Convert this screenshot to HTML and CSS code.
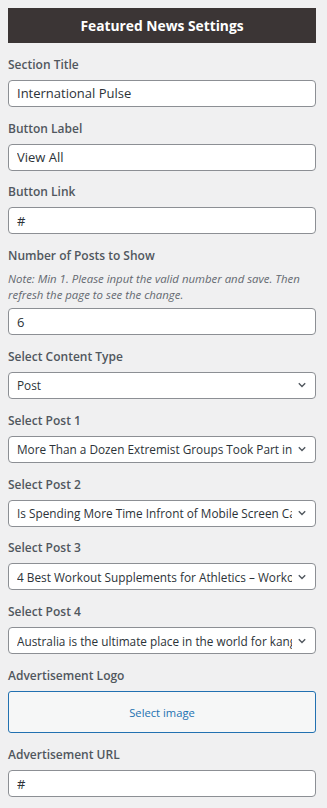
FILE: index.html
```html
<!DOCTYPE html>
<html>
<head>
<meta charset="utf-8">
<link rel="stylesheet" href="styles.css">
</head>
<body>
<div class="panel">
  <h2 class="panel-title">Featured News Settings</h2>

  <div class="control">
    <label class="control-title">Section Title</label>
    <input class="field" type="text" value="International Pulse">
  </div>

  <div class="control">
    <label class="control-title">Button Label</label>
    <input class="field" type="text" value="View All">
  </div>

  <div class="control">
    <label class="control-title">Button Link</label>
    <input class="field" type="text" value="#">
  </div>

  <div class="control">
    <label class="control-title">Number of Posts to Show</label>
    <p class="note">Note: Min 1. Please input the valid number and save. Then refresh the page to see the change.</p>
    <input class="field" type="text" value="6">
  </div>

  <div class="control">
    <label class="control-title">Select Content Type</label>
    <div class="select">
      <span class="select-text">Post</span>
      <svg class="chev" width="8" height="6" viewBox="0 0 8 6"><path d="M0.8 1.3l3.2 3.2 3.2-3.2" fill="none" stroke="#50575e" stroke-width="1.4"/></svg>
    </div>
  </div>

  <div class="control">
    <label class="control-title">Select Post 1</label>
    <div class="select">
      <span class="select-text">More Than a Dozen Extremist Groups Took Part in the Capitol Riot</span>
      <svg class="chev" width="8" height="6" viewBox="0 0 8 6"><path d="M0.8 1.3l3.2 3.2 3.2-3.2" fill="none" stroke="#50575e" stroke-width="1.4"/></svg>
    </div>
  </div>

  <div class="control">
    <label class="control-title">Select Post 2</label>
    <div class="select">
      <span class="select-text">Is Spending More Time Infront of Mobile Screen Causing Harm</span>
      <svg class="chev" width="8" height="6" viewBox="0 0 8 6"><path d="M0.8 1.3l3.2 3.2 3.2-3.2" fill="none" stroke="#50575e" stroke-width="1.4"/></svg>
    </div>
  </div>

  <div class="control">
    <label class="control-title">Select Post 3</label>
    <div class="select">
      <span class="select-text">4 Best Workout Supplements for Athletics – Workout Guide</span>
      <svg class="chev" width="8" height="6" viewBox="0 0 8 6"><path d="M0.8 1.3l3.2 3.2 3.2-3.2" fill="none" stroke="#50575e" stroke-width="1.4"/></svg>
    </div>
  </div>

  <div class="control">
    <label class="control-title">Select Post 4</label>
    <div class="select">
      <span class="select-text">Australia is the ultimate place in the world for kangaroos</span>
      <svg class="chev" width="8" height="6" viewBox="0 0 8 6"><path d="M0.8 1.3l3.2 3.2 3.2-3.2" fill="none" stroke="#50575e" stroke-width="1.4"/></svg>
    </div>
  </div>

  <div class="control">
    <label class="control-title">Advertisement Logo</label>
    <button class="upload" type="button">Select image</button>
  </div>

  <div class="control">
    <label class="control-title">Advertisement URL</label>
    <input class="field" type="text" value="#">
  </div>
</div>
</body>
</html>
```

FILE: styles.css
```css
* { box-sizing: border-box; }
html, body { margin: 0; padding: 0; }
body {
  background: #f0f0f1;
  font-family: "Open Sans", "Noto Sans", sans-serif;
  color: #2c3338;
}
.panel {
  width: 327px;
  padding: 8px 11px 8px 8px;
  display: flex;
  flex-direction: column;
  gap: 11.8px;
}
.panel-title {
  margin: 0;
  height: 35px;
  background: #3b3535;
  color: #fff;
  font-size: 13.8px;
  font-weight: 700;
  line-height: 35px;
  text-align: center;
}
.control {
  display: flex;
  flex-direction: column;
}
.control-title {
  font-size: 12px;
  font-weight: 600;
  line-height: 20px;
  color: #50575e;
  margin-bottom: 5px;
}
.note {
  margin: 0 0 5px;
  font-size: 11.4px;
  font-style: italic;
  line-height: 16px;
  color: #646970;
}
.field {
  width: 100%;
  height: 27px;
  margin: 0;
  padding: 0 8px;
  border: 1px solid #8c8f94;
  border-radius: 4px;
  background: #fff;
  font-family: inherit;
  font-size: 13px;
  color: #2c3338;
  outline: none;
}
.select {
  display: flex;
  align-items: center;
  height: 27px;
  padding: 0 9px 0 8px;
  border: 1px solid #8c8f94;
  border-radius: 4px;
  background: #fff;
  gap: 6px;
}
.select-text {
  flex: 1;
  min-width: 0;
  white-space: nowrap;
  overflow: hidden;
  font-size: 11.8px;
  color: #2c3338;
}
.chev { flex: none; }
.upload {
  width: 100%;
  height: 42.4px;
  margin: 0;
  border: 1px solid #2271b1;
  border-radius: 3px;
  background: #f6f7f7;
  color: #2271b1;
  font-family: inherit;
  font-size: 11.2px;
  cursor: pointer;
}
```
